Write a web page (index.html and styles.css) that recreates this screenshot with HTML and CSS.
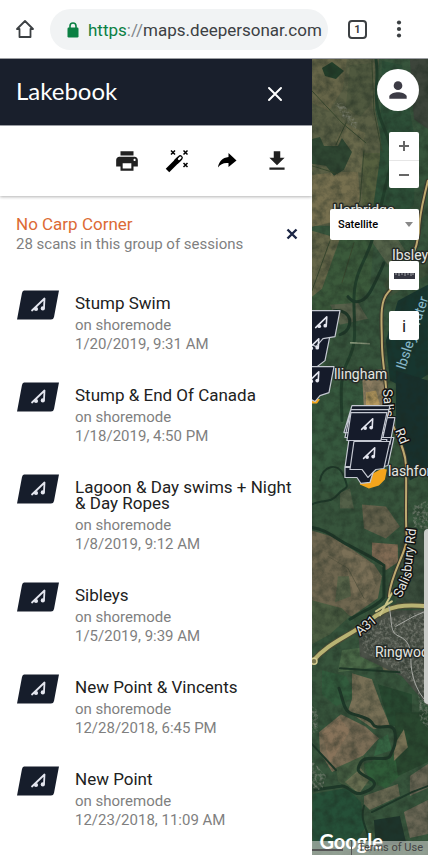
FILE: index.html
```html
<!DOCTYPE html>
<html lang="en">
<head>
  <meta charset="UTF-8">
  <meta name="viewport" content="width=device-width, initial-scale=1.0">
  <title>Lakebook</title>
  <link rel="stylesheet" href="styles.css">
</head>
<body>

  <header class="browser-bar">
    <button class="bar-button" aria-label="Home">
      <svg width="20" height="22" viewBox="0 0 20 22"><path d="M10 3L2 11h2.500v8h11v-8H18z" fill="none" stroke="#3c4043" stroke-width="1.800" stroke-linejoin="round"/></svg>
    </button>
    <button class="address">
      <svg width="12" height="16" viewBox="0 0 12 16"><path d="M3 6V4a3 3 0 0 1 6 0v2" fill="none" stroke="#0b8043" stroke-width="1.600"/><rect x="0.500" y="5.500" width="11" height="10" rx="1.200" fill="#0b8043"/></svg>
      <span class="url"><span class="scheme">https</span><span class="slashes">://</span>maps.deepersonar.com</span>
    </button>
    <button class="tabs">1</button>
    <button class="bar-button" aria-label="Menu">
      <svg width="6" height="18" viewBox="0 0 6 18" fill="#3c4043"><circle cx="3" cy="2.500" r="2.100"/><circle cx="3" cy="9" r="2.100"/><circle cx="3" cy="15.500" r="2.100"/></svg>
    </button>
  </header>

  <main class="app">
    <section class="panel">
      <div class="panel-header">
        <h1>Lakebook</h1>
        <button aria-label="Close">
          <svg width="16" height="16" viewBox="0 0 16 16"><path d="M2 2l12 12M14 2L2 14" stroke="#fff" stroke-width="2" stroke-linecap="round"/></svg>
        </button>
      </div>

      <div class="toolbar">
        <button aria-label="Print">
          <svg width="26" height="26" viewBox="0 0 24 24" fill="#212121"><path d="M19 8H5c-1.660 0-3 1.340-3 3v6h4v4h12v-4h4v-6c0-1.660-1.340-3-3-3zm-3 11H8v-5h8v5zm3-7c-.55 0-1-.45-1-1s.45-1 1-1 1 .45 1 1-.45 1-1 1zm-1-9H6v4h12V3z"/></svg>
        </button>
        <button aria-label="Enhance">
          <svg width="26" height="26" viewBox="0 0 26 26"><path d="M3.500 22.500L15.500 10.500" stroke="#000" stroke-width="5"/><path d="M12.800 13.200L16.200 9.800" stroke="#000" stroke-width="5.200" stroke-linecap="round"/><path d="M15 11L16.400 9.600" stroke="#fff" stroke-width="2.200" stroke-linecap="round"/><path d="M7 2.500l4 4m0-4l-4 4M19.500 2.500l4 4m0-4l-4 4M19.500 15l4 4m0-4l-4 4" stroke="#000" stroke-width="1.500"/></svg>
        </button>
        <button aria-label="Share">
          <svg width="26" height="26" viewBox="0 0 26 26"><path d="M14.500 5l8 7.500-8 6.500v-4C9.500 14.500 6.500 16 4 19.500 4.800 13.500 8.500 9.700 14.500 9z"/></svg>
        </button>
        <button aria-label="Download">
          <svg width="26" height="26" viewBox="0 0 24 24" fill="#212121"><path d="M19 9h-4V3H9v6H5l7 7 7-7zM5 18v2h14v-2H5z"/></svg>
        </button>
      </div>

      <div class="group">
        <div>
          <h2>No Carp Corner</h2>
          <p>28 scans in this group of sessions</p>
        </div>
        <button aria-label="Close group">
          <svg width="12" height="12" viewBox="0 0 12 12"><path d="M1.500 1.500l9 9M10.500 1.500l-9 9" stroke="#1c2645" stroke-width="2.400"/></svg>
        </button>
      </div>

      <svg class="symbols" aria-hidden="true">
        <symbol id="rod" viewBox="0 0 18 18">
          <path d="M3 14.500L15.500 2.500l-.5 9" fill="none" stroke="#e4e6ef" stroke-width="1.800" stroke-linejoin="round" stroke-linecap="round"/>
          <circle cx="7" cy="13" r="2.100" fill="#e4e6ef"/>
          <circle cx="13.800" cy="12.400" r="2.100" fill="#e4e6ef"/>
        </symbol>
        <symbol id="badge" viewBox="0 0 44 30">
          <path d="M8 .5h35L38 27q-.5 2.500-3 2.500H1L6 3Q6.500.5 8 .5z" fill="#161d2b"/>
          <use href="#rod" x="13" y="6" width="18" height="18"/>
        </symbol>
      </svg>

      <ul class="sessions">
        <li>
          <svg class="badge"><use href="#badge"/></svg>
          <div><h3>Stump Swim</h3><p>on shoremode</p><p>1/20/2019, 9:31 AM</p></div>
        </li>
        <li>
          <svg class="badge"><use href="#badge"/></svg>
          <div><h3>Stump &amp; End Of Canada</h3><p>on shoremode</p><p>1/18/2019, 4:50 PM</p></div>
        </li>
        <li>
          <svg class="badge"><use href="#badge"/></svg>
          <div><h3>Lagoon &amp; Day swims + Night &amp; Day Ropes</h3><p>on shoremode</p><p>1/8/2019, 9:12 AM</p></div>
        </li>
        <li>
          <svg class="badge"><use href="#badge"/></svg>
          <div><h3>Sibleys</h3><p>on shoremode</p><p>1/5/2019, 9:39 AM</p></div>
        </li>
        <li>
          <svg class="badge"><use href="#badge"/></svg>
          <div><h3>New Point &amp; Vincents</h3><p>on shoremode</p><p>12/28/2018, 6:45 PM</p></div>
        </li>
        <li>
          <svg class="badge"><use href="#badge"/></svg>
          <div><h3>New Point</h3><p>on shoremode</p><p>12/23/2018, 11:09 AM</p></div>
        </li>
      </ul>
    </section>

    <section class="map">
      <svg class="tiles" viewBox="312 58 116 797" preserveAspectRatio="xMinYMin slice">
        <defs>
          <filter id="ground" x="0" y="0" width="100%" height="100%" color-interpolation-filters="sRGB">
            <feTurbulence type="fractalNoise" baseFrequency="0.120" numOctaves="5" seed="8"/>
            <feColorMatrix values="0 0 0 0 0.110  0 0 0 0 0.160  0 0 0 0 0.120  0 0 0 0.900 -0.300"/>
          </filter>
          <filter id="town" x="0" y="0" width="100%" height="100%" color-interpolation-filters="sRGB">
            <feTurbulence type="fractalNoise" baseFrequency="0.350" numOctaves="2" seed="3"/>
            <feColorMatrix values="0 0 0 0 0.550  0 0 0 0 0.560  0 0 0 0 0.520  0 0 0 1.600 -0.650"/>
            <feComposite in2="SourceGraphic" operator="in"/>
          </filter>
        </defs>
        <rect x="312" y="58" width="116" height="797" fill="#37553c"/>

        <!-- fields -->
        <path d="M312 58h67l-4 50 8 40-6 50-8 27h-57z" fill="#5b6045"/>
        <path d="M312 58h35l-4 30-14 22-17-8z" fill="#666548"/>
        <path d="M350 64l22-2 0 40-12 14-14-10z" fill="#50593f"/>
        <path d="M312 174l46-4 2 30-12 18-36 8z" fill="#77704f"/>
        <path d="M345 122l20 10-4 40-16-2-10-30z" fill="#69694b"/>
        <path d="M364 152l18 0-2 42-12 28-6-20z" fill="#56603f"/>
        <path d="M382 60l20 4 14 80-2 60-30 26-12-14 8-58z" fill="#2d5038"/>
        <path d="M410 58h18v70l-14-10z" fill="#3d453b"/>
        <path d="M322 67l10-6 12 9-8 8-11-3z" fill="#223d29"/>
        <path d="M312 138l8-2 4 9 14 0 4-8 10 14-8 18-10 6-8-10-14-2z" fill="#2f4732"/>
        <path d="M312 235l62 4-4 50-24 20-34 2z" fill="#3b5a3b"/>
        <path d="M312 230l28 8-18 50-10 8z" fill="#666749"/>
        <path d="M370 238l24-6 14 22-20 10z" fill="#55634a"/>
        <path d="M330 304l28-2 10 16-28 6z" fill="#57604a"/>
        <path d="M396 262l32-8v20l-38 22-6-12z" fill="#40543c"/>
        <path d="M398 300l30-16v90l-22 14-16-8-4-40z" fill="#17362f"/>
        <path d="M312 400l34-20 20 10-14 30 10 44-20 30-30-6z" fill="#36593e"/>
        <path d="M362 372l22-4 4 26-8 14-16 0z" fill="#8c7d61"/>
        <path d="M366 392l10-2 4 14-14 4z" fill="#b7995f"/>
        <path d="M396 370l32 10v90l-18 10-14-50z" fill="#17302d"/>
        <path d="M340 492l10-4 4 20-14 0z" fill="#536048"/>
        <path d="M362 504l24 2 14 20-14 12-22-10z" fill="#66624c"/>
        <path d="M312 530l20 6 22 14 20 14 8 12-4 22-26 18-40-8z" fill="#6e664f"/>
        <path d="M340 545l28 16 8 24-10 18-12-8z" fill="#7b7057"/>
        <path d="M372 542l26 2 0 18-12 8-14-14z" fill="#816b54"/>
        <path d="M338 576l11 0 2 20-16 6z" fill="#586449"/>
        <path d="M312 600l30 8 8 8-20 18-18 10z" fill="#4c5e42"/>
        <path d="M342 650l30-4 12 20-46 6z" fill="#4b6a48"/>
        <path d="M374 640l22 4 6 24-18 4z" fill="#67664e"/>
        <path d="M322 670l24 6 10 20-20 10-14-12z" fill="#325c3d"/>
        <path d="M352 673l20 6 8 22 10 24-16 4-26-18 4-12z" fill="#787056"/>
        <path d="M378 684l34 10v30l-22 2-8-26z" fill="#274930"/>
        <path d="M319 732l22-18 24 12 14 12-16 18-31 16-12-20z" fill="#7b6d56"/>
        <path d="M322 732l18-14 10 12-20 34z" fill="#88735a"/>
        <path d="M336 768l28-13 0 22 6 8-22 4-10-8z" fill="#465f42"/>
        <path d="M364 764l32-12 6 22-16 14-16-6z" fill="#2f5c38"/>
        <path d="M378 740l10-6 4 16-18 6z" fill="#366543"/>
        <path d="M345 782l16-14 8 12-10 14z" fill="#6a7052"/>
        <path d="M313 794l34-6 14 14 4 26-14 22h-38z" fill="#255038"/>
        <path d="M364 796l34-12 2 12-30 14-6-6z" fill="#6b6a53"/>
        <path d="M396 712l32 0v50l-30 14-4-30z" fill="#29482f"/>
        <path d="M410 776l18-12v24l-18 8zM404 812l24-12v34l-18 4z" fill="#6c6856"/>
        <path d="M394 745l10-16 4 18-14 14z" fill="#777154"/>
        <path d="M374 820l26-4 6 26-30 6z" fill="#1d342b"/>
        <path d="M358 624l32-14 38 0v96l-26-30-42-20z" fill="#4b5148"/>
        <path d="M400 540l28-10v74l-32 4z" fill="#3a4d3c"/>

        <!-- hedges and the river -->
        <g fill="none" stroke="#1d3828" stroke-linecap="round">
          <path d="M312 90l30 32 24 20M372 60l2 50 8 40M346 122l-10 22M364 150l-4 50-12 24M312 165l26 8M330 240l-18 50M354 242l-12 40" stroke-width="1" stroke="#3a492f"/>
          <path d="M376 58c4 20-4 34 4 58s16 30 8 60-8 40-16 64-18 32-18 60 4 40-6 60-6 40-6 60" stroke-width="3" stroke="#213f2b"/>
          <path d="M334 310c20-2 20 20 6 24M348 296c8 10 18 4 24-8s10-20 12-26" stroke-width="3"/>
          <path d="M312 504c10-6 18 0 26-10s12-2 6-18-22-10-24 4" stroke-width="2"/>
          <path d="M312 527c14 2 22 10 37 18s24 12 35 20v32c-8 10-18 12-34 22" stroke-width="3"/>
          <path d="M339 688c4 10 4 20 10 24s20 4 24 12 20-4 22 8-2 18-5 24-24-2-29 6-4 10 8 16 2 12-7 15-14-8-20-7-18 2-27 4" stroke-width="3"/>
          <path d="M312 744l24 26M364 806c-4 14 2 20 4 30s4 8 2 16M372 812l40-20 16-6M340 668l60 4" stroke-width="2"/>
          <path d="M328 556l20 12 16 30" stroke="#5f5b45"/>
        </g>
        <path d="M350 342l20 1" stroke="#929f82" stroke-width="1.500"/>
        <rect x="312" y="58" width="116" height="797" filter="url(#ground)"/>
        <path d="M386 618l42-8v86l-28-24-36-20-6-24z M412 506l16-6v30l-14-4z M334 102l8 0 16 20-2 6-8-4z M312 706l6 4 0 20-6 4z M312 760l14 16-4 14-10 0z M418 690l10 12v26l-8-8z" filter="url(#town)"/>

        <!-- roads -->
        <g fill="none" stroke-linecap="round">
          <path d="M428 180c-4 18-9 34-9 52-4 30-22 50-31 60s-6 30-6 50 5 40 5 60c2 24 18 40 19 62s-1 60 1 72-16 36-18 60" stroke="#39372c" stroke-width="4"/>
          <path d="M428 180c-4 18-9 34-9 52-4 30-22 50-31 60s-6 30-6 50 5 40 5 60c2 24 18 40 19 62s-1 60 1 72-16 36-18 60" stroke="#bda970" stroke-width="2"/>
          <path d="M312 662c16-20 38-26 58-42s36-16 58-14" stroke="#4a4a34" stroke-width="6"/>
          <path d="M312 662c16-20 38-26 58-42s36-16 58-14" stroke="#b9b373" stroke-width="4"/>
          <path d="M376 611l16-10M380 615l12-22" stroke="#c8c186" stroke-width="2"/>
          <path d="M389 606c4 16 0 26 10 30s12 12 12 24 4 30 16 42M396 626l18-10 14-6" stroke="#a8aaa5"/>
        </g>
        <circle cx="314" cy="661" r="3" fill="#78754d" stroke="#d1ca8f" stroke-width="1.500"/>

        <g class="labels">
          <text x="333" y="214">Harbridge</text>
          <text x="392" y="259">Ibsley</text>
          <text x="334" y="378">llingham</text>
          <text x="388" y="476">lashford</text>
          <text x="375" y="657">Ringwood</text>
          <text class="water" transform="translate(405 370) rotate(-72)">Ibsley Water</text>
          <text class="road" transform="translate(383 389) rotate(86)">Salisb</text>
          <text class="road" transform="translate(395 430) rotate(68)">Rd</text>
          <text class="road" transform="translate(401 598) rotate(-65)">Salis</text>
          <text class="road" transform="translate(411 572) rotate(-83)">bury Rd</text>
          <text class="road" transform="translate(360 636) rotate(-40)">A31</text>
        </g>

        <!-- scan markers -->
        <path d="M312 396l8 3-3 4h-5zM360 480l22-12 5 1-2 10-6 6-10 3-9-4z" fill="#f3a51c"/>
        <g fill="#151b2a" stroke="#c5c9d2" stroke-width="1.200" stroke-linejoin="round">
          <path d="M300 335h30l-5 25-13 10-12-10z"/>
          <path d="M300 310h40l-5 26-12 2-7 8-16-8z"/>
          <path d="M300 366h34l-5 26-9 3-5 6-15-8z"/>
          <path d="M364 417h31l-5 27h-31zM362 437h32l-6 28-12 3h-20z"/>
          <path d="M352 405h38l-6 27h-40zM351 409h38l-6 28h-38z"/>
          <path d="M349 439h38l-6 28h-36zM345 466h30l-5 16-9 1-4-6h-12z"/>
          <path d="M351 412h36l-6 28h-34z"/>
          <path d="M354 441h36l-6 27-8 1-8 8-6-8h-12z"/>
        </g>
        <use href="#rod" x="359" y="416" width="16" height="16"/>
        <use href="#rod" x="361" y="445" width="16" height="16"/>
        <use href="#rod" x="313" y="314" width="16" height="16"/>
        <use href="#rod" x="305" y="336" width="16" height="16"/>
        <use href="#rod" x="305" y="369" width="16" height="16"/>
      </svg>

      <div class="controls">
        <button class="account" aria-label="Account">
          <svg width="26" height="26" viewBox="0 0 24 24" fill="#3c3b45"><circle cx="12" cy="8" r="4"/><path d="M12 14c-2.670 0-8 1.340-8 4v2h16v-2c0-2.660-5.330-4-8-4z"/></svg>
        </button>
        <div class="zoom">
          <button aria-label="Zoom in"><svg width="12" height="12" viewBox="0 0 12 12"><path d="M6 1v10M1 6h10" stroke="#666" stroke-width="2"/></svg></button>
          <button aria-label="Zoom out"><svg width="12" height="12" viewBox="0 0 12 12"><path d="M1 6h10" stroke="#666" stroke-width="2"/></svg></button>
        </div>
        <div class="map-type">
          <select aria-label="Map type">
            <option>Satellite</option>
            <option>Map</option>
          </select>
          <svg width="8" height="5" viewBox="0 0 8 5"><path d="M0 0h8L4 5z" fill="#888"/></svg>
        </div>
        <button class="square" aria-label="Measure">
          <svg width="21" height="6" viewBox="0 0 21 6"><path d="M0 0h21v6H0z" fill="#353641"/><path d="M2 0v2M5 0v3M8 0v2M11 0v3M14 0v2M17 0v3M19 0v2" stroke="#a4a5aa"/></svg>
        </button>
        <button class="square">i</button>
      </div>

      <div class="scroll-thumb"></div>

      <div class="map-footer">
        <span class="google">Google</span>
        <span class="scale"></span>
        <a href="#">Terms of Use</a>
      </div>
    </section>
  </main>

</body>
</html>
```

FILE: styles.css
```css
* {
  margin: 0;
  padding: 0;
  box-sizing: border-box;
}

body {
  display: flex;
  flex-direction: column;
  height: 100vh;
  overflow: hidden;
  background-color: #fff;
  font-family: Roboto, sans-serif;
}

button {
  display: flex;
  justify-content: center;
  align-items: center;
  border: none;
  background: none;
  font-family: inherit;
  cursor: pointer;
}

/* Browser bar */
.browser-bar {
  display: flex;
  align-items: center;
  flex: none;
  height: 59px;
  padding: 0 26px 0 15px;
  border-bottom: 1px solid #9c9ea2;
}

.address {
  flex: 1;
  justify-content: flex-start;
  gap: 9px;
  min-width: 0;
  height: 41px;
  margin: 0 20px 0 15px;
  padding: 2px 4px 0 17px;
  border-radius: 21px;
  background-color: #f1f3f4;
}

.address svg {
  flex: none;
}

.url {
  overflow: hidden;
  color: #3c4043;
  font-size: 17px;
  white-space: nowrap;
}

.scheme {
  color: #0b8043;
}

.slashes {
  color: #80868b;
}

.tabs {
  width: 19px;
  height: 19px;
  margin-right: 29px;
  border: 2px solid #3c4043;
  border-radius: 4px;
  color: #3c4043;
  font-size: 11px;
  font-weight: 700;
}

/* Side panel */
.app {
  display: flex;
  flex: 1;
  min-height: 0;
}

.panel {
  width: 73%;
  overflow: hidden;
  background-color: #fff;
}

.panel-header {
  display: flex;
  justify-content: space-between;
  align-items: center;
  height: 67px;
  padding: 0 29px 4px 16px;
  border-bottom: 1px solid #a3a6ac;
  background-color: #191f2c;
}

.panel-header h1 {
  color: #fff;
  font-family: Lato, sans-serif;
  font-size: 24px;
  font-weight: 400;
}

.panel-header button {
  padding-top: 8px;
}

.toolbar {
  display: flex;
  justify-content: flex-end;
  align-items: center;
  gap: 24px;
  height: 70px;
  padding: 0 22px 0 16px;
  box-shadow: 0 1px 3px rgba(0, 0, 0, 0.3);
}

.group {
  display: flex;
  justify-content: space-between;
  align-items: center;
  padding: 17px 14px 0 16px;
}

.group h2 {
  color: #dc6a35;
  font-size: 17px;
  font-weight: 400;
  line-height: 22px;
}

.group p,
.sessions p {
  color: #7f7f7f;
  font-size: 15px;
  line-height: 19px;
}

.symbols {
  position: absolute;
  width: 0;
  height: 0;
}

.sessions {
  padding: 36px 16px 0;
  list-style: none;
}

.sessions li {
  display: flex;
  gap: 15px;
  padding-bottom: 28px;
}

.sessions h3 {
  margin: 5px 0;
  color: #212121;
  font-size: 17px;
  font-weight: 400;
  line-height: 16px;
}

.badge {
  flex: none;
  width: 44px;
  height: 30px;
}

/* Map */
.map {
  position: relative;
  flex: 1;
  overflow: hidden;
  background-color: #37553c;
}

.tiles {
  display: block;
  width: 100%;
  height: 100%;
}

.labels text {
  fill: #e6e6e2;
  font-family: Roboto, sans-serif;
  font-size: 14px;
  paint-order: stroke;
  stroke: #252b27;
  stroke-width: 3px;
  stroke-linejoin: round;
}

.labels .road {
  font-size: 13px;
  stroke: #111;
}

.labels .water {
  fill: #89b9c9;
  stroke: #1c3c3a;
  stroke-width: 1px;
}

.controls {
  position: absolute;
  top: 10px;
  right: 9px;
  display: flex;
  flex-direction: column;
  align-items: flex-end;
  gap: 21px;
}

.account {
  width: 42px;
  height: 42px;
  border-radius: 50%;
  background-color: #fff;
}

.zoom {
  width: 30px;
  border-radius: 2px;
  background-color: #fff;
}

.zoom button {
  width: 100%;
  height: 28px;
}

.zoom button + button {
  border-top: 1px solid #e6e6e6;
}

.map-type {
  display: flex;
  align-items: center;
  width: 89px;
  height: 31px;
  padding-right: 6px;
  border-radius: 2px;
  background-color: #fff;
}

.map-type select {
  flex: 1;
  min-width: 0;
  height: 100%;
  padding-left: 8px;
  border: none;
  background: none;
  color: #000;
  font-family: inherit;
  font-size: 11px;
  font-weight: 500;
  appearance: none;
}

.square {
  width: 30px;
  height: 29px;
  border-radius: 2px;
  background-color: #fff;
  color: #222;
  font-size: 17px;
}

.scroll-thumb {
  position: absolute;
  top: 59%;
  right: 0;
  width: 4px;
  height: 22%;
  border-radius: 4px 0 0 4px;
  background-color: #cbcdca;
}

.map-footer {
  position: absolute;
  right: 0;
  bottom: 0;
  left: 0;
  display: flex;
  justify-content: flex-end;
  height: 14px;
  background-color: rgba(205, 209, 204, 0.6);
}

.map-footer a {
  position: relative;
  padding: 0 5px 0 6px;
  border-left: 1px solid #555;
  color: #444;
  font-size: 11px;
  line-height: 14px;
  text-decoration: none;
}

.google {
  position: absolute;
  bottom: 3px;
  left: 7px;
  color: #fff;
  font-family: Lato, sans-serif;
  font-size: 20px;
  font-weight: 700;
  line-height: 22px;
}

.scale {
  flex: 1;
  height: 6px;
  margin: 4px 8px 0 0;
  border: solid #555;
  border-width: 0 1px 2px 0;
}
```
